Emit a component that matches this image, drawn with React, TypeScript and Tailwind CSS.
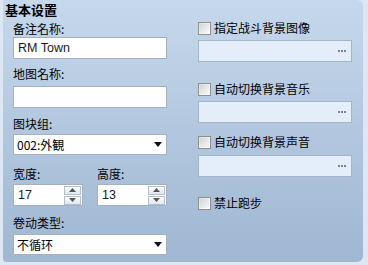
import React from 'react';

const cjk = '"Noto Sans CJK JP", "Noto Sans CJK SC", sans-serif';

function Label({ text, className = '' }: { text: string; className?: string }) {
  return <div className={`h-[16px] leading-[16px] text-[12px] text-black ${className}`}>{text}</div>;
}

function TextBox({ value, className = '' }: { value?: string; className?: string }) {
  return (
    <div className={`h-[22px] w-[154px] border border-[#a3b1c2] bg-white px-[4px] text-[12.5px] leading-[20px] text-[#1a1a1a] font-['Liberation_Sans',sans-serif] ${className}`}>
      {value}
    </div>
  );
}

function Combo({ value, className = '' }: { value: string; className?: string }) {
  return (
    <div className={`flex h-[21px] w-[154px] items-center justify-between border border-[#a3b1c2] bg-white pl-[3px] pr-[4px] ${className}`}>
      <span className="text-[12px] leading-[19px] text-black">{value}</span>
      <svg width="8" height="5" viewBox="0 0 8 5">
        <path d="M0 0 H8 L4 5 Z" fill="#111" />
      </svg>
    </div>
  );
}

function SpinButton({ up }: { up: boolean }) {
  return (
    <div className="flex h-[9px] w-[17px] items-center justify-center border border-[#b4bfcc] bg-gradient-to-b from-[#fbfcfd] to-[#e3e8ee]">
      <svg width="7" height="4" viewBox="0 0 7 4">
        <path d={up ? 'M0 4 H7 L3.5 0 Z' : 'M0 0 H7 L3.5 4 Z'} fill="#555" />
      </svg>
    </div>
  );
}

function Spin({ value }: { value: string }) {
  return (
    <div className="flex h-[22px] w-[70px] items-center justify-between border border-[#a3b1c2] bg-white pl-[4px] pr-[1px]">
      <span className="text-[12.5px] leading-[20px] text-[#1a1a1a] font-['Liberation_Sans',sans-serif]">{value}</span>
      <div className="flex flex-col gap-[1px]">
        <SpinButton up />
        <SpinButton up={false} />
      </div>
    </div>
  );
}

function Check({ text, className = '' }: { text: string; className?: string }) {
  return (
    <div className={`flex h-[14px] items-center gap-[3px] ${className}`}>
      <div className="h-[13px] w-[13px] border border-[#8e8f8f] bg-gradient-to-br from-[#dcdcdc] via-[#f2f2f2] to-white p-[1px]">
        <div className="h-full w-full bg-gradient-to-br from-[#d3d5d8] to-[#f8f8f9]" />
      </div>
      <span className="text-[12px] leading-[14px] text-black">{text}</span>
    </div>
  );
}

function PathBox({ className = '' }: { className?: string }) {
  return (
    <div className={`flex h-[22px] w-[154px] items-center justify-end border border-[#a7b6c7] bg-[#e4eefa] pr-[5px] ${className}`}>
      <div className="flex gap-[1px]">
        <div className="h-[2px] w-[2px] bg-[#7585a8]" />
        <div className="h-[2px] w-[2px] bg-[#7585a8]" />
        <div className="h-[2px] w-[2px] bg-[#7585a8]" />
      </div>
    </div>
  );
}

export default function App() {
  return (
    <div className="h-[265px] w-[368px] bg-[#dce7f3]" style={{ fontFamily: cjk }}>
      <div className="ml-[3px] flex h-[262px] w-[360px] flex-col rounded-r-[6px] rounded-bl-[4px] bg-gradient-to-b from-[#c6d8ec] to-[#9fb7d2]">
        <div className="ml-[2px] mt-[2px] h-[16px] text-[13px] font-bold leading-[16px] text-black">基本设置</div>
        <div className="flex">
          {/* left column */}
          <div className="ml-[10px] flex w-[154px] flex-col">
            <Label text="备注名称:" className="mt-[3px]" />
            <TextBox value="RM Town" />
            <Label text="地图名称:" className="mt-[7px]" />
            <TextBox className="mt-[4px]" />
            <Label text="图块组:" className="mt-[8px]" />
            <Combo value="002:外観" className="mt-[2px]" />
            <div className="mt-[11px] flex">
              <div className="w-[84px]">
                <Label text="宽度:" />
                <div className="mt-[2px]">
                  <Spin value="17" />
                </div>
              </div>
              <div>
                <Label text="高度:" />
                <div className="mt-[2px]">
                  <Spin value="13" />
                </div>
              </div>
            </div>
            <Label text="卷动类型:" className="mt-[9px]" />
            <Combo value="不循环" className="mt-[3px]" />
          </div>
          {/* right column */}
          <div className="ml-[31px] flex w-[154px] flex-col">
            <Check text="指定战斗背景图像" className="mt-[3px]" />
            <PathBox className="mt-[5px]" />
            <Check text="自动切换背景音乐" className="mt-[20px]" />
            <PathBox className="mt-[5px]" />
            <Check text="自动切换背景声音" className="mt-[12px]" />
            <PathBox className="mt-[6px]" />
            <Check text="禁止跑步" className="mt-[19px]" />
          </div>
        </div>
      </div>
    </div>
  );
}
